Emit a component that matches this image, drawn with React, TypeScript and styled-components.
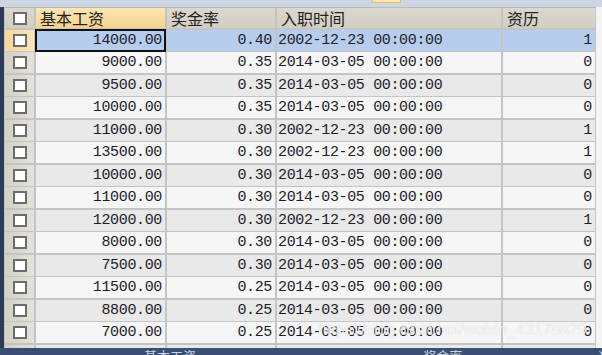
import React from "react";
import styled, { createGlobalStyle, css } from "styled-components";

const GlobalStyle = createGlobalStyle`
  html, body { margin: 0; padding: 0; background: #f3f3f3; overflow: hidden; }
  #root { width: 602px; height: 355px; }
`;

const Page = styled.div`
  position: relative;
  width: 602px;
  height: 355px;
  display: grid;
  grid-template-rows: 7px 341px 7px;
  overflow: hidden;
  background: #f3f3f3;
`;

const TopStrip = styled.div`
  background: #ced6e4;
  display: flex;
  align-items: flex-start;
  padding-left: 372px;
`;

const Tab = styled.div`
  width: 27px;
  height: 2px;
  background: #fde6a6;
  border: 1px solid #e7c068;
  border-top: none;
`;

const Middle = styled.div`
  display: flex;
  overflow: hidden;
`;

const LeftStrip = styled.div`
  width: 4px;
  background: #2c3b58;
  flex: none;
`;

const Table = styled.div`
  flex: none;
  display: grid;
  grid-template-columns: 29px 129px 108px 224px 92px;
  grid-auto-rows: 21px;
  grid-template-rows: 20px;
  column-gap: 2px;
  row-gap: 1.5px;
  align-content: start;
  background: #c4c4c4;
  border-left: 1px solid #c4c4c4;
  border-right: 1px solid #c4c4c4;
  border-top: 1px solid #b9b9b9;
`;

const Filler = styled.div`
  flex: 1;
  background: #f4f4f4;
`;

type Tone = "odd" | "even" | "sel";

const rowBg = (t: Tone) =>
  t === "sel" ? "#b6cdee" : t === "odd" ? "#e9e9e9" : "#f6f6f6";

const HeadCell = styled.div<{ $active?: boolean }>`
  display: flex;
  align-items: center;
  padding-left: 4px;
  font-family: "Noto Sans CJK SC", "Noto Sans", sans-serif;
  font-size: 16px;
  line-height: 18px;
  color: #222;
  white-space: nowrap;
  background: ${(p) =>
    p.$active
      ? "linear-gradient(#fbe6b4, #f6d48e)"
      : "linear-gradient(#dcd8ce, #d2cec2)"};
`;

const CheckCell = styled.div<{ $active?: boolean; $head?: boolean }>`
  display: flex;
  align-items: center;
  justify-content: center;
  padding-left: 1px;
  background: ${(p) =>
    p.$active
      ? "linear-gradient(90deg, #f6d69a, #fbe6bc)"
      : p.$head
      ? "linear-gradient(#dcd8ce, #d2cec2)"
      : "linear-gradient(90deg, #d3d0c5, #e4e2da)"};
`;

const Box = styled.div`
  width: 10px;
  height: 9px;
  border: 2px solid #6c6c6c;
  background: #fff;
`;

const DataCell = styled.div<{ $tone: Tone; $right?: boolean; $focus?: boolean }>`
  display: flex;
  align-items: center;
  justify-content: ${(p) => (p.$right ? "flex-end" : "flex-start")};
  padding: ${(p) => (p.$right ? "0 3px 0 0" : "0 0 0 1px")};
  font-family: "Liberation Mono", "DejaVu Sans Mono", monospace;
  font-size: 15px;
  line-height: 17px;
  letter-spacing: -0.35px;
  color: #1e1c2a;
  white-space: nowrap;
  background: ${(p) => rowBg(p.$tone)};
  ${(p) =>
    p.$focus &&
    css`
      box-shadow: inset 0 0 0 2px #111;
      margin: -1px;
      padding-right: 4px;
    `}
`;

const BottomBar = styled.div`
  background: #3a4d72;
  overflow: hidden;
  display: flex;
  align-items: flex-start;
`;

const BottomItem = styled.span<{ $ml: number }>`
  margin-left: ${(p) => p.$ml}px;
  margin-top: 1px;
  font-family: "Noto Sans CJK SC", "Noto Sans", sans-serif;
  font-size: 13px;
  line-height: 1;
  color: #c9d1e2;
  white-space: nowrap;
`;

const Watermark = styled.div`
  position: absolute;
  left: 318px;
  top: 321px;
  font-family: "Liberation Sans", Arial, sans-serif;
  font-size: 16px;
  line-height: 18px;
  letter-spacing: -0.1px;
  color: rgba(255, 255, 255, 0.82);
  text-shadow: 0 0 1px rgba(120, 120, 120, 0.35);
  pointer-events: none;
`;

const rows: [string, string, string, string][] = [
  ["14000.00", "0.40", "2002-12-23 00:00:00", "1"],
  ["9000.00", "0.35", "2014-03-05 00:00:00", "0"],
  ["9500.00", "0.35", "2014-03-05 00:00:00", "0"],
  ["10000.00", "0.35", "2014-03-05 00:00:00", "0"],
  ["11000.00", "0.30", "2002-12-23 00:00:00", "1"],
  ["13500.00", "0.30", "2002-12-23 00:00:00", "1"],
  ["10000.00", "0.30", "2014-03-05 00:00:00", "0"],
  ["11000.00", "0.30", "2014-03-05 00:00:00", "0"],
  ["12000.00", "0.30", "2002-12-23 00:00:00", "1"],
  ["8000.00", "0.30", "2014-03-05 00:00:00", "0"],
  ["7500.00", "0.30", "2014-03-05 00:00:00", "0"],
  ["11500.00", "0.25", "2014-03-05 00:00:00", "0"],
  ["8800.00", "0.25", "2014-03-05 00:00:00", "0"],
  ["7000.00", "0.25", "2014-03-05 00:00:00", "0"],
  ["", "", "", ""],
];

const bottomItems: [string, number][] = [
  ["·", 20],
  ["·", 19],
  ["·", 19],
  ["·", 16],
  ["基本工资", 18],
  ["·", 40],
  ["·", 40],
  ["·", 40],
  ["奖金率", 68],
  ["·", 72],
  ["入职时", 48],
];

export default function App() {
  return (
    <>
      <GlobalStyle />
      <Page>
        <TopStrip>
          <Tab />
        </TopStrip>
        <Middle>
          <LeftStrip />
          <Table>
            <CheckCell $head>
              <Box />
            </CheckCell>
            <HeadCell $active>基本工资</HeadCell>
            <HeadCell>奖金率</HeadCell>
            <HeadCell>入职时间</HeadCell>
            <HeadCell>资历</HeadCell>
            {rows.map((r, i) => {
              const tone: Tone = i === 0 ? "sel" : i % 2 === 0 ? "odd" : "even";
              return (
                <React.Fragment key={i}>
                  <CheckCell $active={i === 0}>
                    <Box />
                  </CheckCell>
                  <DataCell $tone={tone} $right $focus={i === 0}>
                    {r[0]}
                  </DataCell>
                  <DataCell $tone={tone} $right>
                    {r[1]}
                  </DataCell>
                  <DataCell $tone={tone}>{r[2]}</DataCell>
                  <DataCell $tone={tone} $right>
                    {r[3]}
                  </DataCell>
                </React.Fragment>
              );
            })}
          </Table>
          <Filler />
        </Middle>
        <BottomBar>
          {bottomItems.map(([t, ml], i) => (
            <BottomItem key={i} $ml={ml}>
              {t}
            </BottomItem>
          ))}
        </BottomBar>
        <Watermark>https://blog.csdn.net/weixin_43178829</Watermark>
      </Page>
    </>
  );
}
